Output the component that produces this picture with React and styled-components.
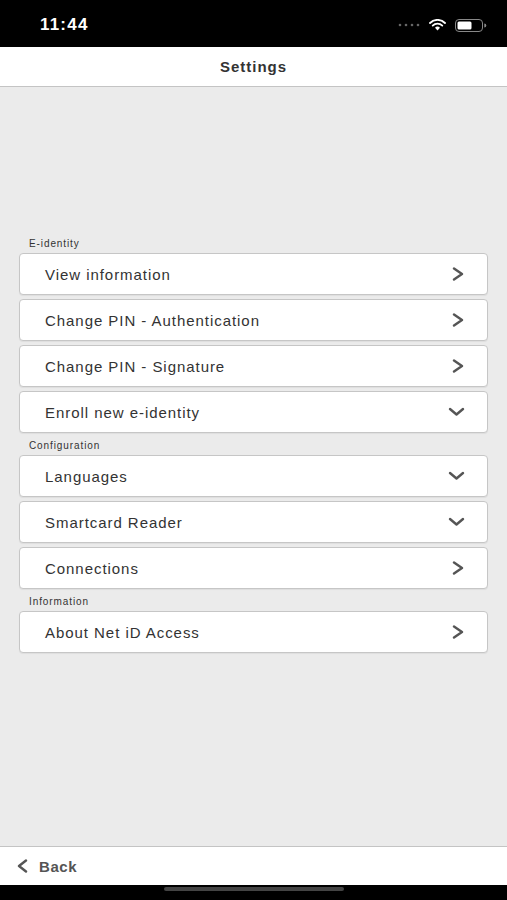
import styled, { createGlobalStyle } from 'styled-components';

const GlobalStyle = createGlobalStyle`
  html, body {
    margin: 0;
    padding: 0;
    background: #000;
  }
  body {
    font-family: 'Liberation Sans', Arial, Helvetica, sans-serif;
  }
`;

const Screen = styled.div`
  display: flex;
  flex-direction: column;
  width: 507px;
  height: 900px;
  background: #ebebeb;
  overflow: hidden;
`;

const StatusBar = styled.div`
  display: flex;
  align-items: center;
  justify-content: space-between;
  height: 47px;
  padding: 3px 20px 0 40px;
  background: #000;
  color: #fff;
  box-sizing: border-box;
`;

const Time = styled.span`
  font-size: 17px;
  font-weight: 700;
  letter-spacing: 1.2px;
`;

const StatusIcons = styled.div`
  display: flex;
  align-items: center;
  gap: 9px;
`;

const Header = styled.div`
  display: flex;
  align-items: center;
  justify-content: center;
  height: 39px;
  background: #fff;
  border-bottom: 1px solid #c4c4c4;
  font-size: 15px;
  font-weight: 700;
  letter-spacing: 1px;
  color: #333;
`;

const Content = styled.div`
  flex: 1;
  padding: 150px 19px 0 19px;
`;

const SectionLabel = styled.div`
  font-size: 10px;
  line-height: 14px;
  letter-spacing: 0.9px;
  color: #333;
  padding: ${(p) => (p.first ? '0' : '6px')} 0 2px 10px;
`;

const List = styled.div`
  display: flex;
  flex-direction: column;
  gap: 4px;
`;

const Row = styled.div`
  display: flex;
  align-items: center;
  justify-content: space-between;
  height: 40px;
  padding: 0 22px 0 25px;
  background: #fff;
  border: 1px solid #c6c6c6;
  border-radius: 4px;
  box-shadow: 0 1px 1px rgba(0, 0, 0, 0.06);
  font-size: 15px;
  letter-spacing: 0.95px;
  color: #333;
`;

const Footer = styled.div`
  display: flex;
  align-items: center;
  gap: 9px;
  height: 38px;
  padding-left: 16px;
  background: #fff;
  border-top: 1px solid #c4c4c4;
  font-size: 15px;
  font-weight: 700;
  letter-spacing: 0.6px;
  color: #555;
`;

const HomeBar = styled.div`
  display: flex;
  justify-content: center;
  height: 15px;
  background: #000;
`;

const HomeIndicator = styled.div`
  width: 180px;
  height: 4px;
  margin-top: 2px;
  border-radius: 2px;
  background: #444;
`;

const Chevron = ({ dir }) => {
  if (dir === 'down') {
    return (
      <svg width="17" height="14" viewBox="0 0 17 14">
        <path d="M2 4 L8.5 9.5 L15 4" fill="none" stroke="#555" strokeWidth="2.4" strokeLinecap="round" strokeLinejoin="round" />
      </svg>
    );
  }
  const d = dir === 'left' ? 'M10 1.5 L3 7 L10 12.5' : 'M3 1.5 L11 7 L3 12.5';
  return (
    <svg width="14" height="14" viewBox="0 0 14 14">
      <path d={d} fill="none" stroke="#555" strokeWidth="2.4" strokeLinecap="round" strokeLinejoin="round" />
    </svg>
  );
};

const sections = [
  {
    title: 'E-identity',
    items: [
      ['View information', 'right'],
      ['Change PIN - Authentication', 'right'],
      ['Change PIN - Signature', 'right'],
      ['Enroll new e-identity', 'down'],
    ],
  },
  {
    title: 'Configuration',
    items: [
      ['Languages', 'down'],
      ['Smartcard Reader', 'down'],
      ['Connections', 'right'],
    ],
  },
  {
    title: 'Information',
    items: [['About Net iD Access', 'right']],
  },
];

const App = () => {
  return (
    <Screen>
      <GlobalStyle />
      <StatusBar>
        <Time>11:44</Time>
        <StatusIcons>
          <svg width="22" height="4" viewBox="0 0 22 4">
            {[1, 7, 13, 19].map((x) => (
              <circle key={x} cx={x + 1} cy="2" r="1.3" fill="#666" />
            ))}
          </svg>
          <svg width="17" height="12" viewBox="0 0 17 12">
            <path d="M8.5 11.5 L6 8.8 A3.6 3.6 0 0 1 11 8.8 Z" fill="#fff" />
            <path d="M3.7 6.6 A6.8 6.8 0 0 1 13.3 6.6" fill="none" stroke="#fff" strokeWidth="1.8" strokeLinecap="round" />
            <path d="M1 4 A10.5 10.5 0 0 1 16 4" fill="none" stroke="#fff" strokeWidth="1.8" strokeLinecap="round" />
          </svg>
          <svg width="32" height="13" viewBox="0 0 32 13">
            <rect x="0.5" y="0.5" width="27" height="12" rx="3.5" fill="none" stroke="#888" strokeWidth="1" />
            <rect x="2.5" y="2.5" width="14" height="8" rx="1.5" fill="#fff" />
            <path d="M29.3 4.5 A2 2 0 0 1 29.3 8.5 Z" fill="#888" />
          </svg>
        </StatusIcons>
      </StatusBar>
      <Header>Settings</Header>
      <Content>
        {sections.map((section, i) => (
          <div key={section.title}>
            <SectionLabel first={i === 0}>{section.title}</SectionLabel>
            <List>
              {section.items.map(([label, dir]) => (
                <Row key={label}>
                  <span>{label}</span>
                  <Chevron dir={dir} />
                </Row>
              ))}
            </List>
          </div>
        ))}
      </Content>
      <Footer>
        <Chevron dir="left" />
        <span>Back</span>
      </Footer>
      <HomeBar>
        <HomeIndicator />
      </HomeBar>
    </Screen>
  );
};

export default App;
